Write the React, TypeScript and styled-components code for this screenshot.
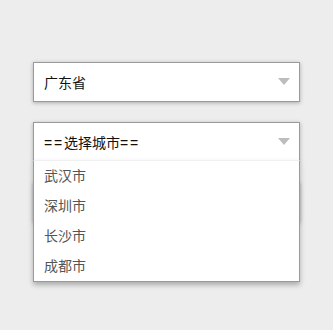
import React from 'react'
import styled, { createGlobalStyle } from 'styled-components'

const Global = createGlobalStyle`
  html, body, #root {
    margin: 0;
    padding: 0;
    height: 100%;
  }
  body {
    background: #ededed;
    font-family: "Liberation Sans", "Noto Sans CJK SC", sans-serif;
  }
`

const Page = styled.div`
  box-sizing: border-box;
  min-height: 100vh;
  padding: 62px 0 0 33px;
  width: 300px;
  display: flex;
  flex-direction: column;
  gap: 20px;
`

const SelectBox = styled.div<{ $open?: boolean }>`
  position: relative;
  height: 40px;
  flex: none;
  box-sizing: border-box;
  border: 1px solid #9a9a9a;
  background: #fff;
  box-shadow: 0 1px 4px rgba(0, 0, 0, 0.28);
  z-index: ${(p) => (p.$open ? 2 : 1)};
`

const Head = styled.div`
  height: 38px;
  display: flex;
  align-items: center;
  justify-content: space-between;
  padding: 0 9px 0 10px;
  font-size: 14px;
  color: #111;
`

const Eq = styled.span`
  letter-spacing: 1.8px;
`

const Arrow = styled.span`
  width: 0;
  height: 0;
  border-left: 6px solid transparent;
  border-right: 6px solid transparent;
  border-top: 7px solid #bdbdbd;
  margin-top: -2px;
`

const List = styled.ul`
  position: absolute;
  top: 37px;
  left: -1px;
  right: -1px;
  margin: 0;
  padding: 0;
  list-style: none;
  background: #fff;
  border: 1px solid #9a9a9a;
  border-top: 1px solid #f0f0f0;
  box-shadow: 0 3px 5px rgba(0, 0, 0, 0.28);
`

const Option = styled.li`
  height: 30px;
  line-height: 30px;
  padding-left: 10px;
  font-size: 14px;
  color: #555;
`

const cities = ['武汉市', '深圳市', '长沙市', '成都市']

export default function App() {
  return (
    <>
      <Global />
      <Page>
        <SelectBox>
          <Head>
            广东省
            <Arrow />
          </Head>
        </SelectBox>
        <SelectBox $open>
          <Head>
            <span>
              <Eq>==</Eq>选择城市<Eq>==</Eq>
            </span>
            <Arrow />
          </Head>
          <List>
            {cities.map((c) => (
              <Option key={c}>{c}</Option>
            ))}
          </List>
        </SelectBox>
        <SelectBox>
          <Head>
            <Arrow />
          </Head>
        </SelectBox>
      </Page>
    </>
  )
}
